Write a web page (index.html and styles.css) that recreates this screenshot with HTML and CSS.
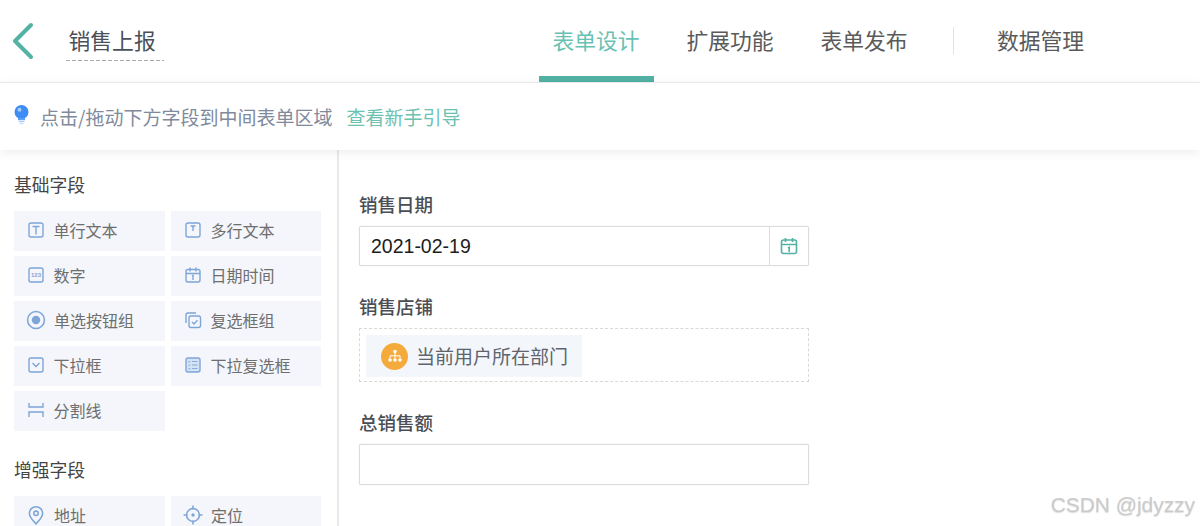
FILE: index.html
```html
<!DOCTYPE html>
<html lang="zh-CN">
<head>
<meta charset="utf-8">
<title>销售上报</title>
<link rel="stylesheet" href="styles.css">
</head>
<body>
<header class="topbar">
  <svg class="back" width="24" height="40" viewBox="0 0 24 40"><path d="M20 4 L4 20 L20 36" fill="none" stroke="#52b2a4" stroke-width="4" stroke-linecap="round" stroke-linejoin="round"/></svg>
  <div class="app-title">销售上报</div>
  <nav class="tabs">
    <a class="tab active">表单设计</a>
    <a class="tab">扩展功能</a>
    <a class="tab">表单发布</a>
    <span class="tab-sep"></span>
    <a class="tab tab-last">数据管理</a>
  </nav>
</header>
<div class="tipbar">
  <svg class="bulb" width="15" height="20" viewBox="0 0 15 20"><circle cx="7.5" cy="7" r="7" fill="#3f8cf4"/><circle cx="5.5" cy="4.8" r="2" fill="#a5cdfb"/><path d="M4 13h7v2.2H4z" fill="#5c9ff5"/><path d="M4.6 16h5.8v1.2H4.6z" fill="#a9cbf9"/><path d="M5.6 18h3.8v1.2H5.6z" fill="#c5dcfb"/></svg>
  <span class="tip-text">点击/拖动下方字段到中间表单区域</span>
  <a class="tip-link">查看新手引导</a>
</div>
<div class="content">
  <aside class="sidebar">
    <h3 class="group-title">基础字段</h3>
    <div class="fields">
      <div class="field"><svg class="ficon" viewBox="0 0 18 18"><rect x="2" y="2" width="14" height="14" rx="2" class="ln"/><path d="M5.5 5.500h7M9 5.500v8" class="ln"/></svg><span>单行文本</span></div>
      <div class="field"><svg class="ficon" viewBox="0 0 18 18"><rect x="2" y="2" width="14" height="14" rx="2" class="ln"/><path d="M6.500 5h5M9 5v5" class="ln"/></svg><span>多行文本</span></div>
      <div class="field"><svg class="ficon" viewBox="0 0 18 18"><rect x="2" y="2" width="14" height="14" rx="2" class="ln"/><text x="9" y="11.300" class="digits">123</text></svg><span>数字</span></div>
      <div class="field"><svg class="ficon" viewBox="0 0 18 18"><rect x="2" y="3.500" width="14" height="12.500" rx="2" class="ln"/><path d="M2 7.500h14M6 1.500v4M12 1.500v4M8 10l1-.6v4.600" class="ln"/></svg><span>日期时间</span></div>
      <div class="field"><svg class="ficon big" viewBox="0 0 18 18"><circle cx="9" cy="9" r="7.600" class="ln"/><circle cx="9" cy="9" r="3.800" fill="#7ea5d8"/></svg><span>单选按钮组</span></div>
      <div class="field"><svg class="ficon" viewBox="0 0 18 18"><path d="M2 12V4a2 2 0 0 1 2-2h8" class="ln"/><rect x="5" y="5" width="11.500" height="11.500" rx="2" class="ln"/><path d="M8 11l2 2 3.500-3.800" class="ln"/></svg><span>复选框组</span></div>
      <div class="field"><svg class="ficon" viewBox="0 0 18 18"><rect x="2" y="2" width="14" height="14" rx="2" class="ln"/><path d="M5.500 7L9 10.500 12.500 7" class="ln"/></svg><span>下拉框</span></div>
      <div class="field"><svg class="ficon" viewBox="0 0 18 18"><rect x="2" y="2" width="14" height="14" rx="2" fill="#d5e2f3" stroke="#7ea5d8" stroke-width="1.400"/><path d="M8 5.500h5.500M8 9h5.500M8 12.500h5.500M4.500 5.500l.8.8 1-1.300M4.500 9l.8.8 1-1.300M4.500 12.500l.8.8 1-1.300" class="thin"/></svg><span>下拉复选框</span></div>
      <div class="field"><svg class="ficon" viewBox="0 0 18 18"><path d="M2 2v4h14V2M2 16v-5h14v5" class="ln"/></svg><span>分割线</span></div>
    </div>
    <h3 class="group-title group-second">增强字段</h3>
    <div class="fields">
      <div class="field"><svg class="ficon big" viewBox="0 0 18 18"><path d="M9 17C5.500 13.500 3 10.800 3 7.500a6 6 0 0 1 12 0c0 3.300-2.500 6-6 9.500z" class="ln"/><circle cx="9" cy="7.500" r="2" class="ln"/></svg><span>地址</span></div>
      <div class="field"><svg class="ficon big" viewBox="0 0 18 18"><circle cx="9" cy="9" r="5.800" class="ln"/><circle cx="9" cy="9" r="1.500" fill="#7ea5d8"/><path d="M9 .5v3.500M9 14v3.500M.5 9H4M14 9h3.500" class="ln"/></svg><span>定位</span></div>
    </div>
  </aside>
  <main class="canvas">
    <div class="form-label form-label-first">销售日期</div>
    <div class="input date">
      <span class="date-value">2021-02-19</span>
      <span class="date-btn"><svg width="18" height="18" viewBox="0 0 18 18"><rect x="1.500" y="3" width="15" height="13.500" rx="2" fill="none" stroke="#52b2a4" stroke-width="1.600"/><path d="M1.500 7.500h15M5.500 1v4M12.500 1v4M8 11l1.200-.6v4.800" fill="none" stroke="#52b2a4" stroke-width="1.600"/></svg></span>
    </div>
    <div class="form-label">销售店铺</div>
    <div class="dashed">
      <div class="chip">
        <span class="chip-icon"><svg width="16" height="16" viewBox="0 0 16 16"><circle cx="8" cy="3.500" r="1.800" fill="#fff"/><circle cx="3" cy="12" r="1.800" fill="#fff"/><circle cx="8" cy="12" r="1.800" fill="#fff"/><circle cx="13" cy="12" r="1.800" fill="#fff"/><path d="M8 5v5M3 10V7.800h10V10" fill="none" stroke="#fff" stroke-width="1"/></svg></span>
        <span class="chip-text">当前用户所在部门</span>
      </div>
    </div>
    <div class="form-label">总销售额</div>
    <div class="input empty"></div>
  </main>
</div>
<div class="watermark">CSDN @jdyzzy</div>
</body>
</html>
```
FILE: styles.css
```css
* { box-sizing: border-box; }
html, body { margin: 0; padding: 0; height: 526px; overflow: hidden; background: #fff; }
body { font-family: "Noto Sans CJK SC", "Noto Sans", sans-serif; position: relative; }

.topbar { height: 83px; display: flex; align-items: flex-start; border-bottom: 1px solid #eeeeee; position: relative; }
.back { margin: 21px 0 0 11px; flex: none; }
.app-title { margin: 27px 0 0 31px; width: 98px; height: 34px; padding-left: 2.500px; font-size: 21.800px; line-height: 26px; color: #4a5058; background: repeating-linear-gradient(90deg, #aaa 0 4px, transparent 4px 6px) left bottom / 100% 1px no-repeat; }
.tabs { display: flex; align-items: flex-start; margin-left: 375px; height: 82px; }
.tab { display: block; width: 115px; height: 82px; padding: 26px 1px 0 0; margin-right: 19px; text-align: center; font-size: 21.800px; line-height: 28px; color: #5a5a5a; border-bottom: 6px solid transparent; }
.tab.active { color: #68c1b2; border-bottom-color: #52b2a4; }
.tab-sep { width: 1px; height: 27px; margin: 27px 0 0 12px; background: #e2e2e2; }
.tab.tab-last { margin: 0 0 0 29.500px; }

.tipbar { height: 67px; display: flex; align-items: center; padding: 0 0 0 14px; box-shadow: 0 2px 10px rgba(0, 0, 0, 0.08); position: relative; z-index: 2; background: #fff; font-size: 19px; line-height: 26px; }
.bulb { flex: none; margin: -3px 0 0 0; }
.tip-text { margin-left: 11px; color: #808a9c; }
.tip-link { margin-left: 14px; color: #6cc1b1; }

.content { display: flex; height: 376px; }
.sidebar { width: 339px; flex: none; padding-left: 14px; border-right: 2px solid #e9e9e9; }
.group-title { margin: 22px 0 15px; font-size: 17.800px; line-height: 24px; font-weight: 400; color: #444; }
.group-second { margin-top: 26px; }
.fields { display: grid; grid-template-columns: 151px 150px; column-gap: 6px; grid-auto-rows: 40px; row-gap: 5px; }
.field { display: flex; align-items: center; background: #f4f6fb; padding: 0 0 2px 13px; font-size: 16px; color: #6e6e6e; }
.ficon { width: 18px; height: 18px; margin-right: 9px; margin-left: -0.500px; flex: none; }
.ficon.big { width: 20px; height: 20px; margin-left: -1.500px; margin-right: 8.500px; }
.ln { fill: none; stroke: #7ea5d8; stroke-width: 1.400; }
.thin { fill: none; stroke: #7ea5d8; stroke-width: 0.900; }
.digits { font-family: "Liberation Sans", sans-serif; font-size: 6px; font-weight: 700; fill: #7ea5d8; text-anchor: middle; }

.canvas { flex: 1; padding: 42px 0 0 20px; }
.form-label { margin: 28px 0 10px; width: 450px; font-size: 18.500px; line-height: 24px; font-weight: 500; color: #4a4e54; }
.form-label-first { margin-top: 0; }
.input { width: 450px; height: 40px; border: 1px solid #ddd; border-radius: 2px; background: #fff; box-shadow: 0 0 1px #ccc; }
.input.empty { height: 41px; }
.date { display: flex; align-items: center; justify-content: space-between; }
.date-value { padding-left: 11px; font-family: "Liberation Sans", Arial, sans-serif; font-size: 19.500px; color: #1c1c1c; }
.date-btn { width: 39px; height: 100%; display: flex; align-items: center; justify-content: center; border-left: 1px solid #ddd; }
.dashed { width: 450px; height: 54px; border: 1px dashed #d8d8d8; padding: 6px; }
.chip { width: 216px; height: 42px; display: flex; align-items: center; padding-left: 15px; background: #f3f6fb; font-size: 19px; color: #5e646c; }
.chip-icon { width: 27px; height: 27px; margin-right: 8px; border-radius: 50%; background: #f4ab3c; display: flex; align-items: center; justify-content: center; flex: none; }
.chip-text { margin-bottom: 2px; }

.watermark { position: absolute; right: 5px; bottom: 8px; font-family: "Liberation Sans", Arial, sans-serif; font-size: 20.900px; line-height: 26px; color: #cbcbcb; text-shadow: 0 1px 1px rgba(120, 120, 120, 0.25); }
```
